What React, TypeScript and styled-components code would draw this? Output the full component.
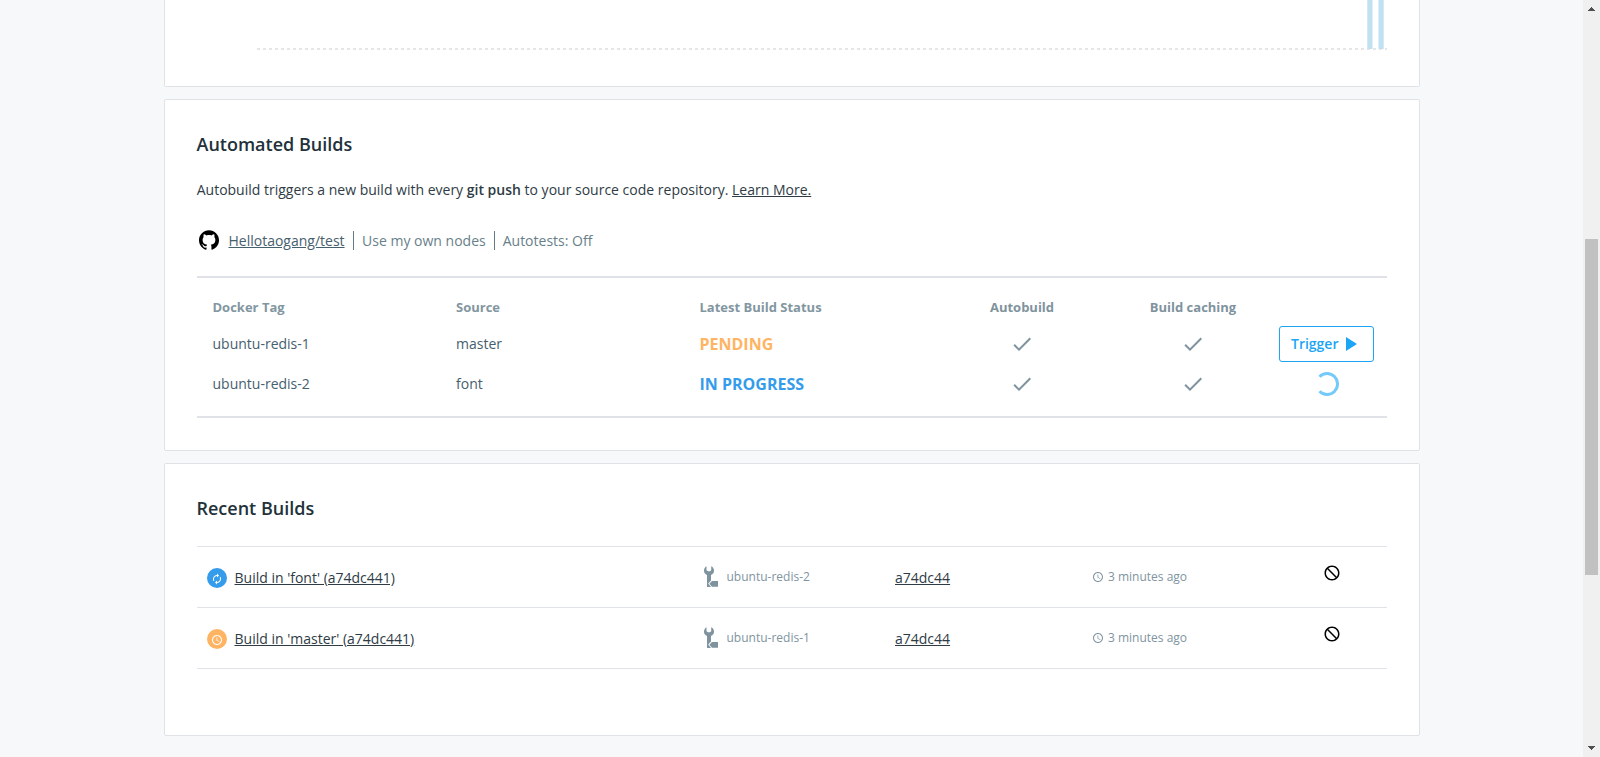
import React from "react";
import styled, { createGlobalStyle } from "styled-components";
import { MdAutorenew, MdBlock, MdCheck, MdPlayArrow, MdSchedule } from "react-icons/md";
import { SiGithub } from "react-icons/si";

const GlobalStyle = createGlobalStyle`
  * { box-sizing: border-box; }
  body { margin: 0; background: #f7f8fa; font-family: "Open Sans", sans-serif; font-size: 14px; color: #2f3c45; overflow: hidden; }
  svg { display: block; flex: none; }
  h2, p { margin: 0; }
`;

const Page = styled.div`
  display: flex;
  height: 757px;
  overflow: hidden;
`;

const Content = styled.main`
  flex: 1;
  display: flex;
  flex-direction: column;
  gap: 12px;
  padding-left: 164px;
`;

const Card = styled.section<{ $height: number; $open?: boolean }>`
  flex: none;
  width: 1256px;
  height: ${(p) => p.$height}px;
  padding: 0 32px;
  background: #fff;
  border: 1px solid #dfe2e7;
  border-radius: 2px;
  ${(p) => p.$open && "border-top: 0; border-top-left-radius: 0; border-top-right-radius: 0;"}
`;

const Chart = styled.svg`
  margin-left: 60px;
`;

const Title = styled.h2<{ $space: number }>`
  padding-top: 32px;
  margin-left: -0.5px;
  margin-bottom: ${(p) => p.$space}px;
  font-size: 18px;
  font-weight: 600;
  line-height: 24px;
  color: #22313a;
`;

const Lead = styled.p`
  margin-left: -0.3px;
  line-height: 20px;
  b { font-weight: 600; }
`;

const Link = styled.a`
  color: inherit;
  text-decoration: underline;
`;

const RepoBar = styled.div`
  display: flex;
  align-items: center;
  height: 24px;
  margin-top: 28px;
  padding-left: 2px;
  color: #687f8a;
`;

const RepoLink = styled(Link)`
  margin-left: 9.5px;
  color: #46606e;
`;

const RepoNote = styled.span`
  margin-left: 8px;
  padding-left: 8px;
  border-left: 1px solid #637985;
  line-height: 19px;

  ${RepoLink} + & { margin-left: 8.5px; }
`;

const TagTable = styled.div`
  margin-top: 24px;
  padding: 12px 0 12px 15.5px;
  border-top: 2px solid #dfe3e8;
  border-bottom: 2px solid #dfe3e8;
`;

const TagRow = styled.div<{ $head?: boolean }>`
  display: grid;
  grid-template-columns: 243.5px 243.5px ${(p) => (p.$head ? 237 : 236.5)}px 171px 171px 1fr;
  align-items: center;
  height: ${(p) => (p.$head ? 34 : 40)}px;
  color: ${(p) => (p.$head ? "#8296a1" : "#46606e")};
  font-size: ${(p) => (p.$head ? 13 : 14)}px;
  font-weight: ${(p) => (p.$head ? 700 : 400)};
`;

const TagText = styled.span`
  padding-bottom: 2px;
`;

const Center = styled.div`
  display: flex;
  justify-content: center;
  color: #7f939e;
`;

const Status = styled.span<{ $color: string }>`
  color: ${(p) => p.$color};
  font-size: 16px;
  font-weight: 700;
`;

const TriggerButton = styled.button`
  display: flex;
  align-items: center;
  width: 95px;
  height: 36px;
  margin-left: 1px;
  padding: 0 11px;
  border: 1px solid #1ba5f4;
  border-radius: 3px;
  background: #fff;
  color: #1ba5f4;
  font: 600 14px "Open Sans", sans-serif;
`;

const TriggerLabel = styled.span`
  padding-bottom: 2px;
`;

const SpinnerBox = styled.div`
  display: flex;
  justify-content: center;
  width: 96px;
  margin-left: 1px;
`;

const BuildList = styled.div`
  border-top: 1px solid #dfe3e7;
`;

const BuildRow = styled.div`
  display: grid;
  grid-template-columns: 497px 191px 197px 231px 1fr;
  align-items: center;
  height: 61px;
  padding-left: 10px;
  border-bottom: 1px solid #dfe3e7;
`;

const BuildName = styled.div`
  display: flex;
  align-items: center;
  gap: 7.5px;
  padding-top: 2px;
`;

const BuildLink = styled(Link)`
  padding-bottom: 2px;
`;

const Badge = styled.span<{ $color: string }>`
  display: flex;
  align-items: center;
  justify-content: center;
  width: 20px;
  height: 20px;
  padding-top: 2px;
  border-radius: 50%;
  background: ${(p) => p.$color};
  color: #fff;
`;

const Meta = styled.div<{ $gap: number }>`
  display: flex;
  align-items: center;
  gap: ${(p) => p.$gap}px;
  color: #8094a0;
  font-size: 12px;
`;

const MetaText = styled.span`
  padding-bottom: 2px;
`;

const Cancel = styled.div`
  padding-bottom: 8px;
  color: #000;
  svg { transform: scaleX(-1); }
`;

const Scrollbar = styled.aside`
  display: flex;
  flex-direction: column;
  align-items: center;
  width: 17px;
  background: #f0f0f0;
`;

const Thumb = styled.div`
  width: 13px;
  height: 336px;
  margin: 222px 0 165px;
  background: #c1c1c1;
`;

const WrenchIcon = () => (
  <svg width="14" height="22" viewBox="0 0 14 22" fill="#7f939e">
    <path d="M2.5 0.3V4.2L4 5.2H6L7.2 4.2V0.3C9.2 1.2 10 2.9 10 4.8C10 6.8 8.9 8.3 7 9V14.5L4.2 17.5L7 21H3V9C1.1 8.3 0 6.8 0 4.8C0 2.9 0.8 1.2 2.5 0.3Z" />
    <path d="M5.3 17.7L8 15H14V20.8H8Z" />
  </svg>
);

const Spinner = () => (
  <svg width="24" height="24" viewBox="0 0 24 24" fill="none" stroke="#74cbfa" strokeWidth="3">
    <path d="M4.5 4.7A10.5 10.5 0 1 1 4.5 19.3" />
  </svg>
);

const tags = [
  { tag: "ubuntu-redis-1", source: "master", status: "PENDING", color: "#ffb463", busy: false },
  { tag: "ubuntu-redis-2", source: "font", status: "IN PROGRESS", color: "#349ceb", busy: true },
];

const builds = [
  { name: "Build in 'font' (a74dc441)", tag: "ubuntu-redis-2", color: "#349ceb", Icon: MdAutorenew },
  { name: "Build in 'master' (a74dc441)", tag: "ubuntu-redis-1", color: "#ffb463", Icon: MdSchedule },
];

export default function App() {
  return (
    <Page>
      <GlobalStyle />
      <Content>
        <Card $height={87} $open>
          <Chart width="1130" height="50">
            <line x1="0" y1="49" x2="1130" y2="49" stroke="#e6e6e6" strokeWidth="2" strokeDasharray="3 3" />
            <rect x="1110.3" y="0" width="5.2" height="49" fill="#bfe1f1" />
            <rect x="1121.5" y="0" width="5.2" height="49" fill="#bfe1f1" />
          </Chart>
        </Card>

        <Card $height={352}>
          <Title $space={24}>Automated Builds</Title>
          <Lead>
            Autobuild triggers a new build with every <b>git push</b> to your source code repository. <Link>Learn More.</Link>
          </Lead>
          <RepoBar>
            <SiGithub size={20} color="#000" />
            <RepoLink>Hellotaogang/test</RepoLink>
            <RepoNote>Use my own nodes</RepoNote>
            <RepoNote>Autotests: Off</RepoNote>
          </RepoBar>
          <TagTable>
            <TagRow $head>
              <span>Docker Tag</span>
              <span>Source</span>
              <span>Latest Build Status</span>
              <Center>Autobuild</Center>
              <Center>Build caching</Center>
            </TagRow>
            {tags.map((t) => (
              <TagRow key={t.tag}>
                <TagText>{t.tag}</TagText>
                <TagText>{t.source}</TagText>
                <Status $color={t.color}>{t.status}</Status>
                <Center><MdCheck size={24} /></Center>
                <Center><MdCheck size={24} /></Center>
                {t.busy ? (
                  <SpinnerBox><Spinner /></SpinnerBox>
                ) : (
                  <TriggerButton>
                    <TriggerLabel>Trigger</TriggerLabel>
                    <MdPlayArrow size={24} />
                  </TriggerButton>
                )}
              </TagRow>
            ))}
          </TagTable>
        </Card>

        <Card $height={273}>
          <Title $space={26}>Recent Builds</Title>
          <BuildList>
            {builds.map((b) => (
              <BuildRow key={b.name}>
                <BuildName>
                  <Badge $color={b.color}><b.Icon size={12} /></Badge>
                  <BuildLink>{b.name}</BuildLink>
                </BuildName>
                <Meta $gap={8.5}><WrenchIcon /><MetaText>{b.tag}</MetaText></Meta>
                <div><Link>a74dc44</Link></div>
                <Meta $gap={4}><MdSchedule size={12} /><MetaText>3 minutes ago</MetaText></Meta>
                <Cancel><MdBlock size={18} /></Cancel>
              </BuildRow>
            ))}
          </BuildList>
        </Card>
      </Content>
      <Scrollbar>
        <svg width="17" height="17" shapeRendering="crispEdges"><path d="M5 11L8.5 7L12 11Z" fill="#505050" /></svg>
        <Thumb />
        <svg width="17" height="17" shapeRendering="crispEdges"><path d="M5 6L8.5 10L12 6Z" fill="#505050" /></svg>
      </Scrollbar>
    </Page>
  );
}
